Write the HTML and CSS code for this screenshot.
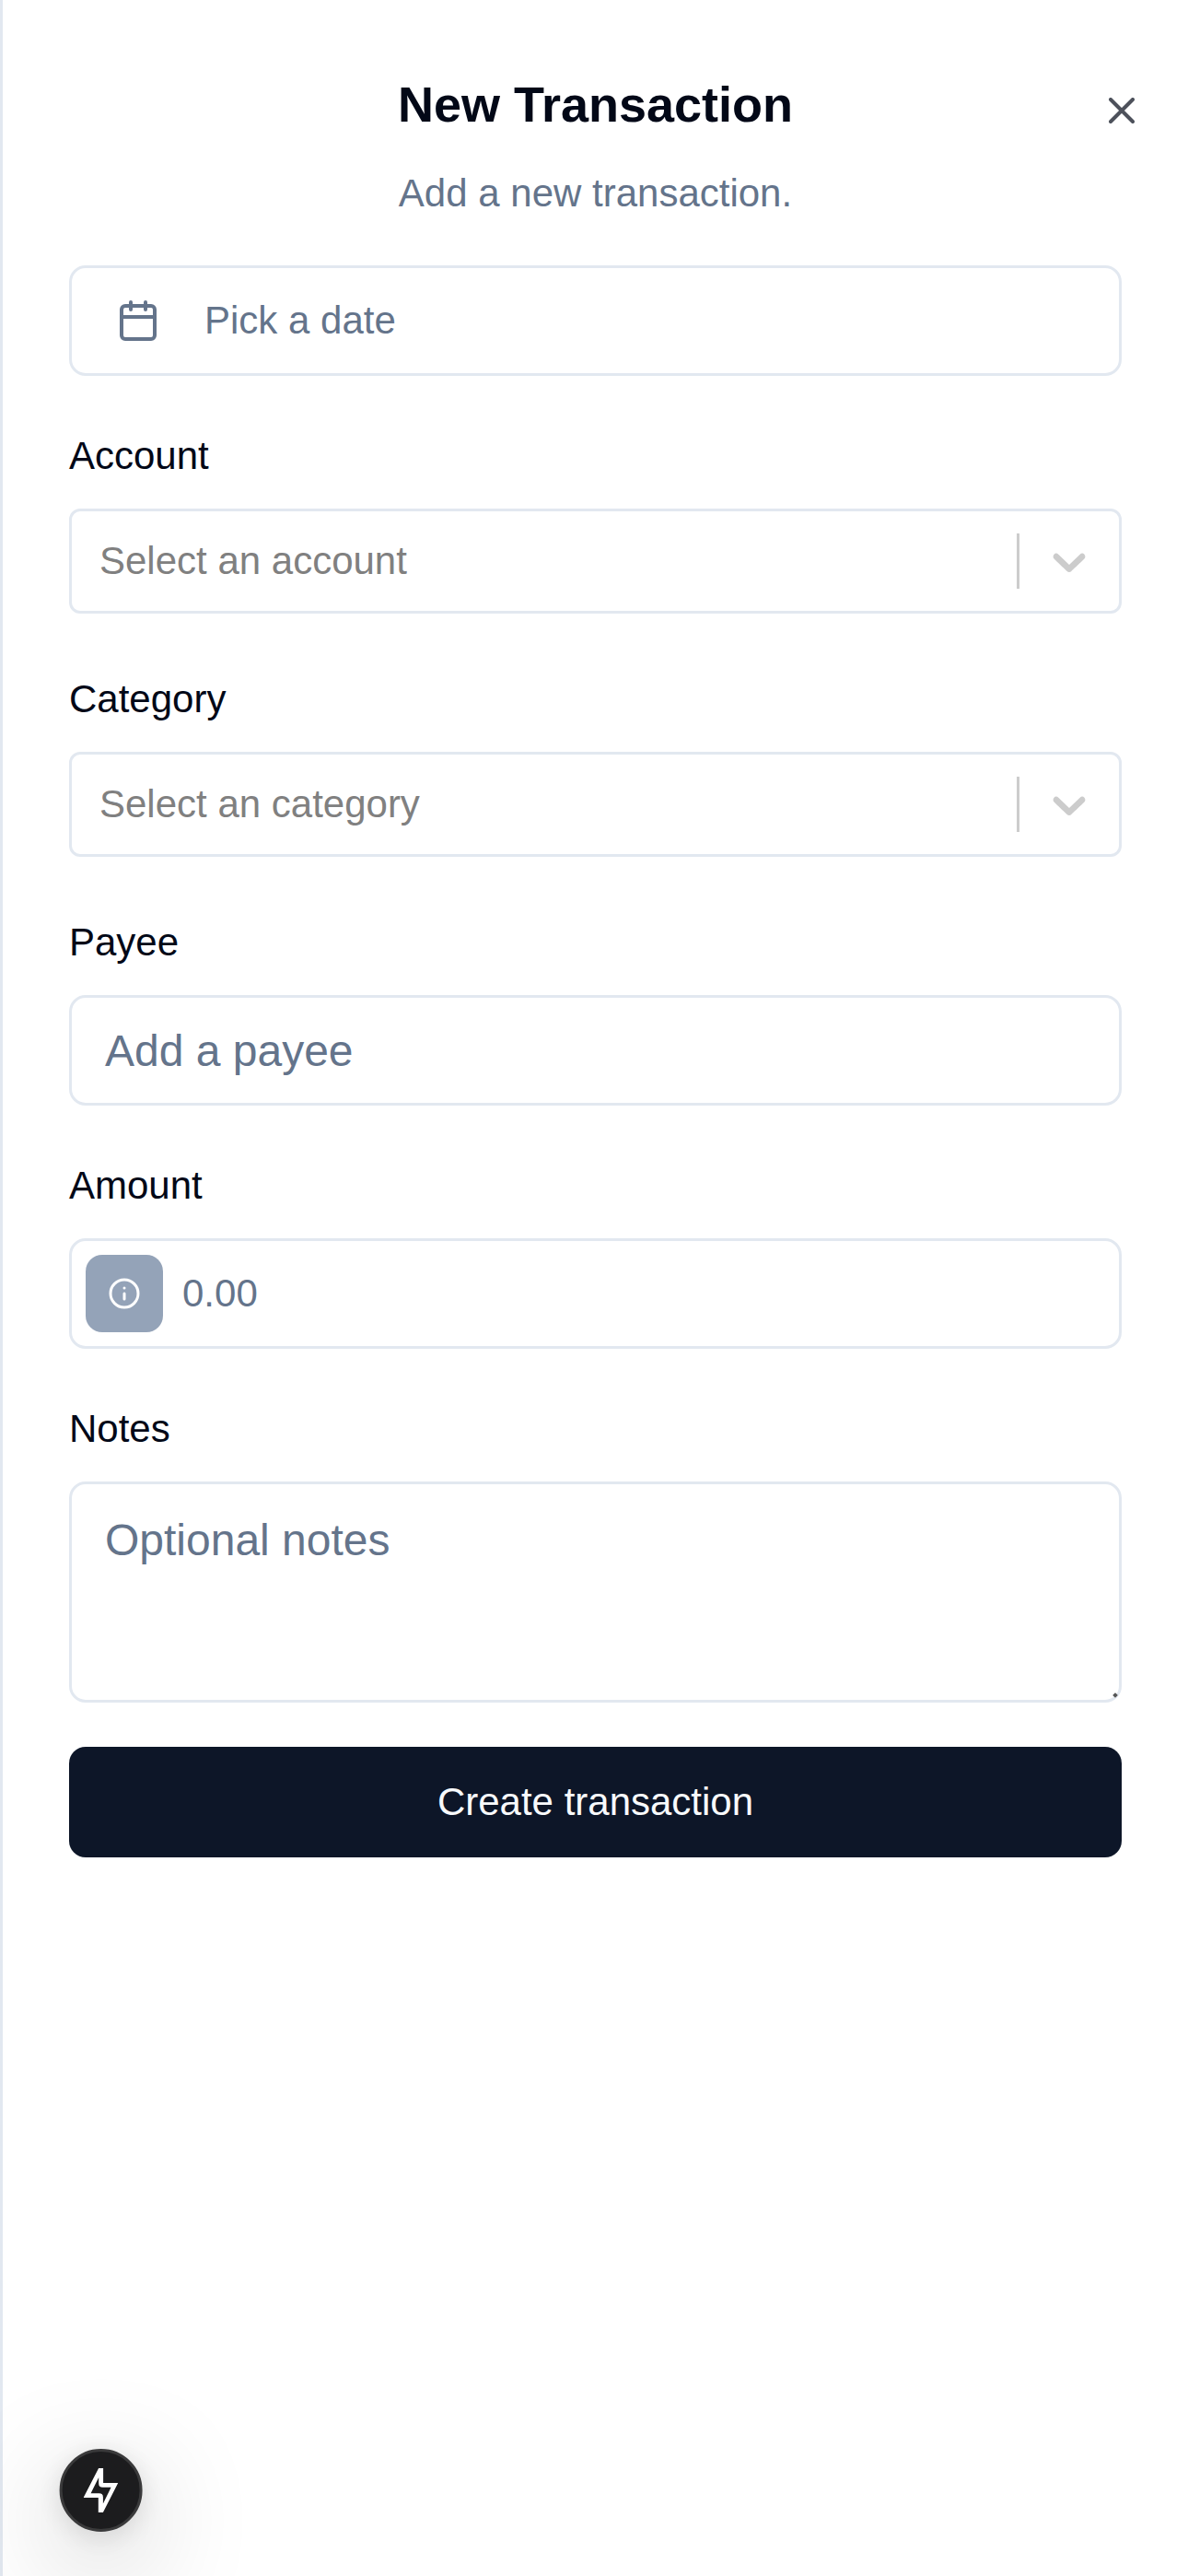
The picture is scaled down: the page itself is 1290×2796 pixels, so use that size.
FILE: index.html
```html
<!DOCTYPE html>
<html lang="en">
<head>
<meta charset="utf-8">
<title>New Transaction</title>
<link rel="stylesheet" href="styles.css">
</head>
<body>
<main class="sheet">
  <header class="sheet-header">
    <h2 class="sheet-title">New Transaction</h2>
    <p class="sheet-description">Add a new transaction.</p>
  </header>
  <form class="form">
    <div class="control date-control">
      <svg class="icon" viewBox="0 0 24 24"><path d="M8 2v4M16 2v4"/><rect width="18" height="18" x="3" y="4" rx="2"/><path d="M3 10h18"/></svg>
      <span>Pick a date</span>
    </div>
    <div class="field field-select">
      <div class="label-row"><label class="label">Account</label></div>
      <div class="select">
        <span class="select-value">Select an account</span>
        <span class="select-separator"></span>
        <svg class="select-arrow" viewBox="0 0 20 20"><path d="M4.516 7.548c0.436-0.446 1.043-0.481 1.576 0l3.908 3.747 3.908-3.747c0.533-0.481 1.141-0.446 1.574 0 0.436 0.445 0.408 1.197 0 1.615-0.406 0.418-4.695 4.502-4.695 4.502-0.217 0.223-0.502 0.335-0.787 0.335s-0.57-0.112-0.789-0.335c0 0-4.287-4.084-4.695-4.502s-0.436-1.17 0-1.615z"/></svg>
      </div>
    </div>
    <div class="field field-select">
      <div class="label-row"><label class="label">Category</label></div>
      <div class="select">
        <span class="select-value">Select an category</span>
        <span class="select-separator"></span>
        <svg class="select-arrow" viewBox="0 0 20 20"><path d="M4.516 7.548c0.436-0.446 1.043-0.481 1.576 0l3.908 3.747 3.908-3.747c0.533-0.481 1.141-0.446 1.574 0 0.436 0.445 0.408 1.197 0 1.615-0.406 0.418-4.695 4.502-4.695 4.502-0.217 0.223-0.502 0.335-0.787 0.335s-0.57-0.112-0.789-0.335c0 0-4.287-4.084-4.695-4.502s-0.436-1.17 0-1.615z"/></svg>
      </div>
    </div>
    <div class="field">
      <div class="label-row"><label class="label">Payee</label></div>
      <div class="control text-control"><span>Add a payee</span></div>
    </div>
    <div class="field">
      <div class="label-row"><label class="label">Amount</label></div>
      <div class="control amount-control">
        <span class="amount-toggle">
          <svg class="icon icon-small" viewBox="0 0 24 24"><circle cx="12" cy="12" r="10"/><path d="M12 16v-4M12 8h.01"/></svg>
        </span>
        <span>0.00</span>
      </div>
    </div>
    <div class="field">
      <div class="label-row"><label class="label">Notes</label></div>
      <div class="control notes-control">
        <span>Optional notes</span>
        <i class="resize-grip"></i>
      </div>
    </div>
    <button class="submit" type="button">Create transaction</button>
  </form>
</main>
<svg class="icon close" viewBox="0 0 24 24"><path d="M18 6 6 18M6 6l12 12"/></svg>
<div class="dev-badge">
  <svg class="bolt" viewBox="0 0 38 48"><path fill-rule="evenodd" d="M16.5 0H21.5V16H37.6L21.3 48H16.2V32H0ZM16.6 10 8 27.3H17Q21.3 27.3 21.3 31.5V38.5L30 20.8H20.8Q16.6 20.8 16.6 16.5Z"/></svg>
</div>
</body>
</html>
```
FILE: styles.css
```css
* {
  box-sizing: border-box;
}

body {
  margin: 0;
  background: #fff;
  color: #020817;
  font-family: "Liberation Sans", Arial, sans-serif;
  font-size: 48px;
  line-height: 72px;
}

.sheet {
  display: flex;
  flex-direction: column;
  gap: 48px;
  min-height: 2796px;
  padding: 72px;
  border-left: 3px solid #e2e8f0;
}

.sheet-header {
  display: flex;
  flex-direction: column;
  gap: 24px;
  text-align: center;
}

.sheet-title {
  height: 84px;
  margin: 0;
  font-size: 54px;
  font-weight: 600;
  line-height: 82px;
}

.sheet-description {
  margin: 0;
  color: #64748b;
  font-size: 42px;
  line-height: 60px;
}

.form {
  display: flex;
  flex-direction: column;
  gap: 48px;
}

.field {
  display: flex;
  flex-direction: column;
  gap: 24px;
}

.field-select {
  padding-bottom: 6px;
}

.label-row {
  height: 72px;
  padding-top: 1px;
}

.label {
  font-size: 42px;
  line-height: 42px;
}

.control {
  display: flex;
  align-items: center;
  height: 120px;
  border: 3px solid #e2e8f0;
  border-radius: 18px;
  color: #64748b;
}

.icon {
  width: 48px;
  height: 48px;
  fill: none;
  stroke: currentColor;
  stroke-width: 2;
  stroke-linecap: round;
  stroke-linejoin: round;
}

.icon-small {
  width: 36px;
  height: 36px;
}

.date-control {
  gap: 48px;
  padding: 0 48px;
  font-size: 42px;
}

.text-control {
  padding: 2px 36px 0;
}

.select {
  display: flex;
  align-items: center;
  height: 114px;
  border: 3px solid #e2e8f0;
  border-radius: 12px;
  color: #808080;
  font-size: 42px;
}

.select-value {
  flex: 1;
  padding-left: 30px;
}

.select-separator {
  width: 3px;
  height: 60px;
  background: #ccc;
}

.select-arrow {
  width: 60px;
  height: 60px;
  margin: 0 24px;
  fill: #ccc;
}

.amount-control {
  gap: 21px;
  padding: 0 15px;
  font-size: 42px;
}

.amount-toggle {
  display: flex;
  align-items: center;
  justify-content: center;
  width: 84px;
  height: 84px;
  border-radius: 18px;
  background: #94a3b8;
  color: #fff;
}

.notes-control {
  position: relative;
  align-items: flex-start;
  height: 240px;
  padding: 25px 36px;
}

.resize-grip {
  position: absolute;
  right: 2px;
  bottom: 3px;
  width: 4px;
  height: 4px;
  background: #555;
  transform: rotate(45deg);
}

.submit {
  height: 120px;
  border: 0;
  border-radius: 18px;
  background: #0d1628;
  color: #f8fafc;
  font: 42px/60px "Liberation Sans", Arial, sans-serif;
}

.close {
  position: absolute;
  top: 96px;
  right: 48px;
  opacity: 0.7;
}

.dev-badge {
  position: fixed;
  bottom: 48px;
  left: 65px;
  display: flex;
  align-items: center;
  justify-content: center;
  width: 90px;
  height: 90px;
  border: 3px solid #3a3a3b;
  border-radius: 50%;
  background: #1c1c1e;
  box-shadow: 0 33px 120px rgba(0, 0, 0, 0.25), 0 6px 30px rgba(0, 0, 0, 0.12);
  transform: translateX(-0.4px);
}

.bolt {
  width: 38px;
  height: 48px;
  fill: #fff;
}
```
